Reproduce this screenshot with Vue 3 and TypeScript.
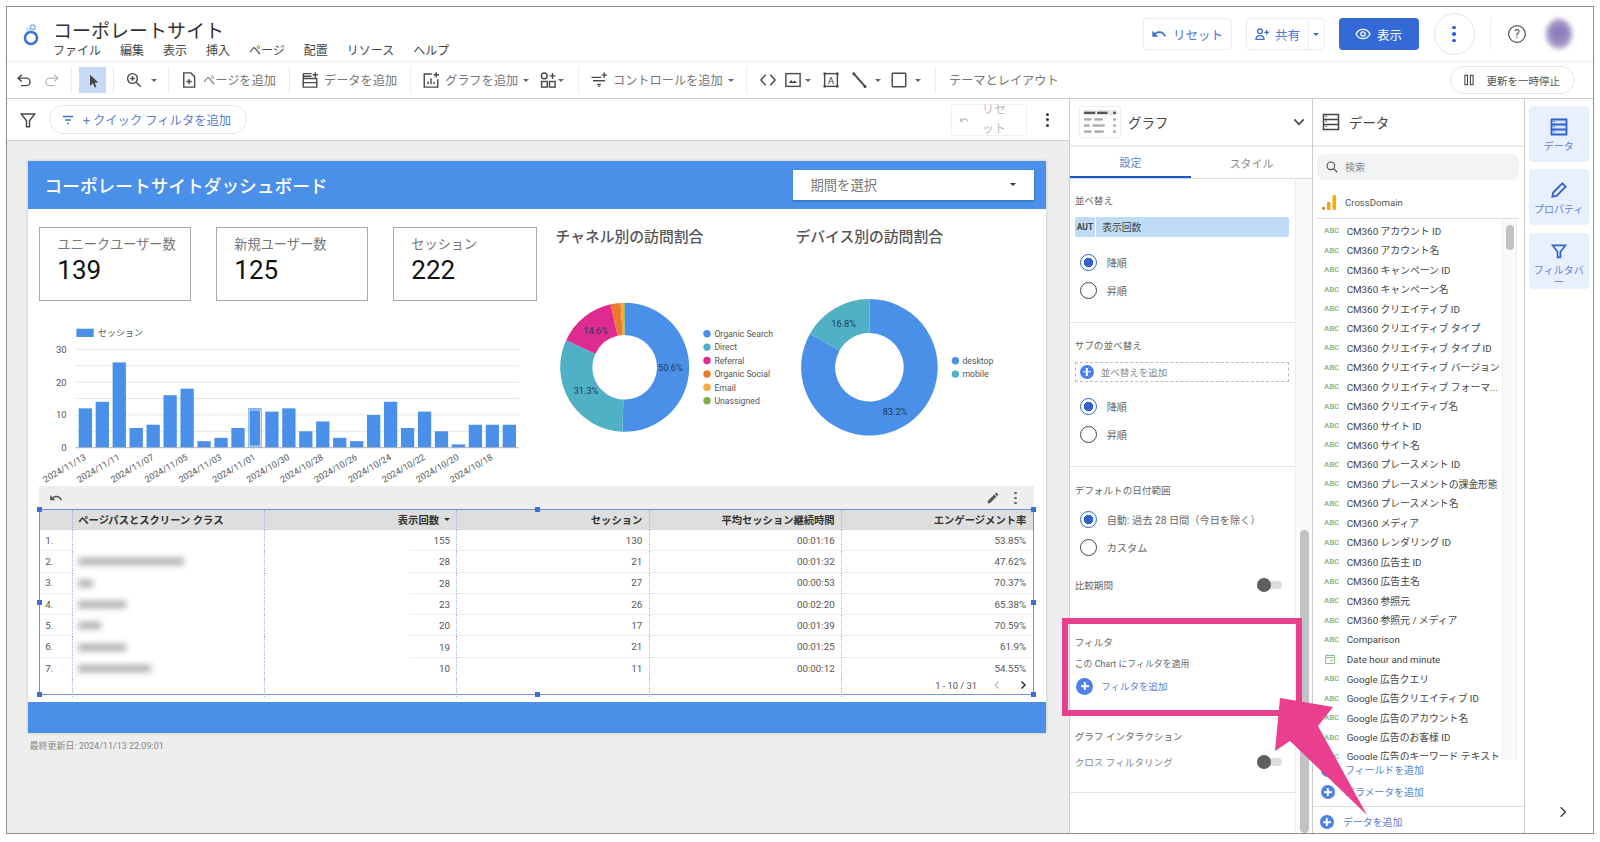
<template>
    <div class="frame">
        <header class="top-bar">
            <svg class="logo" viewBox="0 0 24 34">
                <circle cx="12" cy="21" r="6" fill="none" stroke="#3b73d9" stroke-width="2.6"/>
                <circle cx="13.8" cy="10.2" r="2.4" fill="none" stroke="#7fa8ea" stroke-width="1.3"/>
                <circle cx="8.8" cy="12.5" r="1.4" fill="none" stroke="#9fbdf0" stroke-width="1"/>
            </svg>
            <div class="doc">
                <div class="doc-title">コーポレートサイト</div>
                <nav class="menu">
                    <span v-for="m in menus" :key="m">{{ m }}</span>
                </nav>
            </div>
            <div class="top-actions">
                <button class="btn btn-reset">
                    <svg class="ic-16" viewBox="0 0 24 24"><path :d="icons.undoFill" fill="#3b6fd4"/></svg>
                    リセット
                </button>
                <div class="btn btn-share">
                    <span class="share-main">
                        <svg class="ic-16" viewBox="0 0 24 24"><circle cx="9" cy="8" r="3.5" class="st-blue"/><path d="M3 20c0-4 3-5.500 6-5.500s6 1.500 6 5.500z" class="st-blue"/><path d="M19 6v7M15.500 9.500h7" class="st-blue"/></svg>
                        共有
                    </span>
                    <span class="share-caret"><i class="caret caret-blue"></i></span>
                </div>
                <button class="btn btn-view">
                    <svg class="ic-16" viewBox="0 0 24 24"><path d="M1.5 12C4 7 8 5 12 5s8 2 10.5 7c-2.5 5-6.5 7-10.5 7S4 17 1.500 12z" fill="none" stroke="#fff" stroke-width="2"/><circle cx="12" cy="12" r="3.2" fill="none" stroke="#fff" stroke-width="2"/></svg>
                    表示
                </button>
                <button class="btn-more">
                    <i></i><i></i><i></i>
                </button>
                <span class="top-sep"></span>
                <svg class="help" viewBox="0 0 24 24">
                    <circle cx="12" cy="12" r="10" fill="none" stroke="#555" stroke-width="1.5"/>
                    <text x="12" y="17" text-anchor="middle" class="help-q">?</text>
                </svg>
                <span class="avatar"></span>
            </div>
        </header>

        <div class="toolbar">
            <div class="tb-group g-history">
                <svg class="tb-ic" viewBox="0 0 24 24"><path :d="icons.undo" class="st"/></svg>
                <svg class="tb-ic" viewBox="0 0 24 24"><path :d="icons.redo" class="st-light"/></svg>
            </div>
            <div class="tb-group g-select">
                <span class="select-btn">
                    <svg class="tb-ic" viewBox="0 0 24 24"><path d="M8 5v15l3.8-3.600 2.500 5.600 2.300-1-2.500-5.400 5-.2z" fill="#444"/></svg>
                </span>
            </div>
            <div class="tb-group g-zoom">
                <svg class="tb-ic" viewBox="0 0 24 24"><circle cx="10" cy="10" r="6.5" class="st"/><path d="M15 15l6 6M10 7v6M7 10h6" class="st"/></svg>
                <i class="caret"></i>
            </div>
            <div class="tb-group g-add">
                <svg class="tb-ic" viewBox="0 0 24 24"><path d="M5 2.500h9.500L19.500 7.500V21.500H5zM12 10.500v7M8.500 14h7" class="st"/></svg>
                <span class="tb-text">ページを追加</span>
            </div>
            <div class="tb-group g-add">
                <svg class="tb-ic" viewBox="0 0 24 24"><path d="M3 3.500h11M3 3.500v18h18V10H3M3 15.500h18M3 7h11M19 1.500v7M15.500 5h7" class="st"/></svg>
                <span class="tb-text">データを追加</span>
            </div>
            <div class="tb-group g-add g-chart">
                <svg class="tb-ic" viewBox="0 0 24 24"><path d="M13 4H3v17.500h18V11M8 17.500v-4M12 17.500v-8M16 17.500v-3M19 1.500v7M15.500 5h7" class="st"/></svg>
                <span class="tb-text">グラフを追加</span>
                <i class="caret"></i>
                <svg class="tb-ic ic-components" viewBox="0 0 24 24"><circle cx="7" cy="6.5" r="3.8" class="st"/><path d="M18 2.500v8M14 6.500h8" class="st"/><rect x="3.5" y="14" width="7.5" height="7.5" class="st"/><rect x="14" y="14" width="7.5" height="7.5" class="st"/></svg>
                <i class="caret caret-near"></i>
            </div>
            <div class="tb-group g-add g-control">
                <svg class="tb-ic" viewBox="0 0 24 24"><path d="M2 8.500h13M4 13h16M9.500 18h5M11 20.500h2M19 2v7M15.500 5.500h7" class="st"/></svg>
                <span class="tb-text">コントロールを追加</span>
                <i class="caret"></i>
            </div>
            <div class="tb-group g-insert">
                <svg class="tb-ic" viewBox="0 0 24 24"><path d="M9 5l-6.500 7L9 19M15 5l6.500 7L15 19" class="st"/></svg>
                <svg class="tb-ic" viewBox="0 0 24 24"><rect x="2.5" y="3.5" width="19" height="17" class="st"/><path d="M6.500 16l3-4 2.500 2.500 2-2 3.500 3.500z" fill="#444"/></svg>
                <i class="caret caret-near"></i>
                <svg class="tb-ic ins-text" viewBox="0 0 24 24"><rect x="3.5" y="3.5" width="17" height="17" class="st"/><rect x="2" y="2" width="3" height="3" fill="#444"/><rect x="19" y="2" width="3" height="3" fill="#444"/><rect x="2" y="19" width="3" height="3" fill="#444"/><rect x="19" y="19" width="3" height="3" fill="#444"/><text x="12" y="17" text-anchor="middle" class="a-glyph">A</text></svg>
                <svg class="tb-ic ins-line" viewBox="0 0 24 24"><path d="M5 3.500l15 17" fill="none" stroke="#444" stroke-width="2.5"/><circle cx="5" cy="3.5" r="2" fill="#444"/><circle cx="20" cy="20.5" r="2" fill="#444"/></svg>
                <i class="caret"></i>
                <svg class="tb-ic ins-rect" viewBox="0 0 24 24"><rect x="3" y="3" width="18" height="18" rx="1" class="st"/></svg>
                <i class="caret"></i>
            </div>
            <span class="tb-text theme">テーマとレイアウト</span>
            <button class="pause">
                <svg class="ic-14" viewBox="0 0 24 24"><rect x="5" y="4" width="4.5" height="16" class="st"/><rect x="14.5" y="4" width="4.5" height="16" class="st"/></svg>
                更新を一時停止
            </button>
        </div>

        <div class="workspace">
            <div class="main">
                <div class="filter-bar">
                    <svg class="funnel" viewBox="0 0 24 24"><path d="M3 4h18l-7 9v8h-4v-8z" class="st"/></svg>
                    <button class="quick-filter">
                        <svg class="ic-14" viewBox="0 0 24 24"><path d="M3 6h18M7 12h10M10.500 18h3" fill="none" stroke="#3b6fd4" stroke-width="2.2"/></svg>
                        <span>+ クイック フィルタを追加</span>
                    </button>
                    <div class="reset-off">
                        <svg class="ic-10" viewBox="0 0 24 24"><path :d="icons.undoFill" fill="#bbb"/></svg>
                        <span>リセット</span>
                    </div>
                    <span class="bar-more"><i></i><i></i><i></i></span>
                </div>

                <div class="canvas">
                    <div class="report">
                        <div class="report-head">
                            <h1>コーポレートサイトダッシュボード</h1>
                            <div class="period">
                                <span>期間を選択</span>
                                <i class="caret caret-dark"></i>
                            </div>
                        </div>

                        <div class="report-body">
                            <div class="report-top">
                                <div class="left-col">
                                    <div class="cards">
                                        <div
                                            v-for="card in cards"
                                            :key="card.label"
                                            class="card"
                                            :class="card.cls"
                                        >
                                            <div class="card-label">{{ card.label }}</div>
                                            <div class="card-value">{{ card.value }}</div>
                                        </div>
                                    </div>
                                    <svg class="bar-chart" viewBox="39.3 320 497.4 166.7">
                                        <rect x="76.7" y="328.7" width="17.3" height="8.3" fill="#4a90e8"/>
                                        <text x="98.3" y="336" class="t-axis t-legend">セッション</text>
                                        <line
                                            v-for="g in gridLines"
                                            :key="g"
                                            x1="76"
                                            x2="519"
                                            :y1="g"
                                            :y2="g"
                                            stroke="#e6e6e6"
                                        />
                                        <text
                                            v-for="t in yTicks"
                                            :key="t.label"
                                            x="67"
                                            :y="t.y + 3.5"
                                            text-anchor="end"
                                            class="t-axis"
                                        >{{ t.label }}</text>
                                        <rect
                                            v-for="bar in bars"
                                            :key="bar.x"
                                            :x="bar.x"
                                            :y="bar.y"
                                            width="13.3"
                                            :height="bar.h"
                                            fill="#4a90e8"
                                        />
                                        <rect x="249.5" y="410" width="11.3" height="36.2" fill="none" stroke="#d6e6fb"/>
                                        <line x1="76" x2="519" y1="447.7" y2="447.7" stroke="#aab2bd"/>
                                        <text
                                            v-for="d in xLabels"
                                            :key="d.label"
                                            text-anchor="end"
                                            class="t-axis t-date"
                                            :transform="`translate(${d.x} 459) rotate(-30)`"
                                        >{{ d.label }}</text>
                                    </svg>
                                </div>

                                <div class="pie-block pie-one">
                                    <h2>チャネル別の訪問割合</h2>
                                    <svg class="pie" viewBox="544.3 250 240 200">
                                        <path
                                            v-for="s in channelSlices"
                                            :key="s.name"
                                            :d="s.d"
                                            :fill="s.color"
                                        />
                                        <text
                                            v-for="l in channelLabels"
                                            :key="l.text"
                                            :x="l.x"
                                            :y="l.y"
                                            text-anchor="middle"
                                            class="t-pie"
                                        >{{ l.text }}</text>
                                        <g
                                            v-for="(s, i) in channelSlices"
                                            :key="s.name"
                                        >
                                            <circle cx="707.3" :cy="333.7 + i * 13.4" r="3.7" :fill="s.color"/>
                                            <text x="714.7" :y="337 + i * 13.4" class="t-legend2">{{ s.name }}</text>
                                        </g>
                                    </svg>
                                </div>

                                <div class="pie-block pie-two">
                                    <h2>デバイス別の訪問割合</h2>
                                    <svg class="pie" viewBox="784.3 250 249 200">
                                        <path
                                            v-for="s in deviceSlices"
                                            :key="s.name"
                                            :d="s.d"
                                            :fill="s.color"
                                        />
                                        <text
                                            v-for="l in deviceLabels"
                                            :key="l.text"
                                            :x="l.x"
                                            :y="l.y"
                                            text-anchor="middle"
                                            class="t-pie"
                                        >{{ l.text }}</text>
                                        <g
                                            v-for="(s, i) in deviceSlices"
                                            :key="s.name"
                                        >
                                            <circle cx="955.7" :cy="360.7 + i * 13.4" r="3.7" :fill="s.color"/>
                                            <text x="962.7" :y="364 + i * 13.4" class="t-legend2">{{ s.name }}</text>
                                        </g>
                                    </svg>
                                </div>
                            </div>

                            <div class="table-tools">
                                <svg class="ic-14" viewBox="0 0 24 24"><path :d="icons.undoFill" fill="#555"/></svg>
                                <svg class="ic-14 tool-pencil" viewBox="0 0 24 24"><path d="M3 17.250V21h3.750L17.810 9.940l-3.750-3.750L3 17.250zM20.710 7.040a1 1 0 0 0 0-1.410l-2.340-2.340a1 1 0 0 0-1.410 0l-1.830 1.830 3.750 3.750 1.830-1.830z" fill="#555"/></svg>
                                <span class="tool-more"><i></i><i></i><i></i></span>
                            </div>

                            <div class="table">
                                <div class="tr th">
                                    <div class="td"></div>
                                    <div class="td td-left">ページパスとスクリーン クラス</div>
                                    <div class="td">表示回数 <i class="caret caret-dark"></i></div>
                                    <div class="td">セッション</div>
                                    <div class="td">平均セッション継続時間</div>
                                    <div class="td">エンゲージメント率</div>
                                </div>
                                <div
                                    v-for="(row, i) in rows"
                                    :key="i"
                                    class="tr"
                                    :class="{ 'tr-last': i === rows.length - 1 }"
                                >
                                    <div class="td td-no">{{ i + 1 }}.</div>
                                    <div class="td td-path">
                                        <span
                                            v-if="row.blur"
                                            class="blurred"
                                            :style="{ width: row.blur + 'px' }"
                                        ></span>
                                    </div>
                                    <div class="td td-views">{{ row.views }}</div>
                                    <div class="td">{{ row.sessions }}</div>
                                    <div class="td">{{ row.duration }}</div>
                                    <div class="td">{{ row.rate }}</div>
                                </div>
                                <div class="tr tr-foot">
                                    <div class="td"></div>
                                    <div class="td"></div>
                                    <div class="td"></div>
                                    <div class="td"></div>
                                    <div class="td"></div>
                                    <div class="td td-pager">
                                        <span>1 - 10 / 31</span>
                                        <svg class="ic-12 pager-prev" viewBox="0 0 24 24"><path d="M15 5l-7 7 7 7" fill="none" stroke="#bbb" stroke-width="2.5"/></svg>
                                        <svg class="ic-12 pager-next" viewBox="0 0 24 24"><path d="M9 5l7 7-7 7" fill="none" stroke="#333" stroke-width="3"/></svg>
                                    </div>
                                </div>
                                <i
                                    v-for="h in handles"
                                    :key="h"
                                    class="handle"
                                    :class="h"
                                ></i>
                            </div>
                        </div>

                        <div class="report-foot"></div>
                    </div>
                    <div class="updated">最終更新日: 2024/11/13 22:09:01</div>
                </div>
            </div>

            <aside class="chart-panel">
                <div class="panel-head">
                    <span class="chart-thumb">
                        <svg viewBox="0 0 42 32">
                            <rect x="3" y="3" width="36" height="6" fill="#e8e8e8"/>
                            <g
                                v-for="(r, i) in thumbRows"
                                :key="i"
                            >
                                <rect x="4" :y="r.y" :width="r.a" height="2.5" :fill="r.c"/>
                                <rect :x="r.bx" :y="r.y" :width="r.b" height="2.5" :fill="r.c"/>
                                <rect x="35" :y="r.y" width="3" height="2.5" :fill="r.c"/>
                            </g>
                        </svg>
                    </span>
                    <span class="panel-title">グラフ</span>
                    <svg class="chevron" viewBox="0 0 24 24"><path d="M5 8l7 7.500L19 8" fill="none" stroke="#444" stroke-width="2.4"/></svg>
                </div>
                <div class="tabs">
                    <span class="tab tab-on">設定</span>
                    <span class="tab">スタイル</span>
                </div>
                <div class="panel-scroll">
                    <div class="panel-body">
                        <section class="sec sec-sort">
                            <div class="sec-label">並べ替え</div>
                            <div class="sort-chip"><b>AUT</b><span>表示回数</span></div>
                            <div class="radios">
                                <label class="radio-row"><i class="radio on"></i>降順</label>
                                <label class="radio-row"><i class="radio"></i>昇順</label>
                            </div>
                        </section>
                        <section class="sec sec-sub">
                            <div class="sec-label">サブの並べ替え</div>
                            <div class="sort-add">
                                <i class="plus plus-sm"></i>
                                <span>並べ替えを追加</span>
                            </div>
                            <div class="radios">
                                <label class="radio-row"><i class="radio on"></i>降順</label>
                                <label class="radio-row"><i class="radio"></i>昇順</label>
                            </div>
                        </section>
                        <section class="sec sec-rest">
                            <div class="sec-label">デフォルトの日付範囲</div>
                            <div class="radios radios-date">
                                <label class="radio-row"><i class="radio on"></i>自動: 過去 28 日間（今日を除く）</label>
                                <label class="radio-row"><i class="radio"></i>カスタム</label>
                            </div>
                            <div class="switch-row compare">
                                <span>比較期間</span>
                                <i class="switch"></i>
                            </div>
                            <div class="sec-label filter-label">フィルタ</div>
                            <div class="filter-note">この Chart にフィルタを適用</div>
                            <div class="filter-add">
                                <i class="plus"></i>
                                <span>フィルタを追加</span>
                            </div>
                            <div class="sec-label interact-label">グラフ インタラクション</div>
                            <div class="switch-row cross">
                                <span>クロス フィルタリング</span>
                                <i class="switch"></i>
                            </div>
                        </section>
                    </div>
                    <div class="panel-track"><span></span></div>
                </div>
            </aside>

            <aside class="data-panel">
                <div class="panel-head data-head">
                    <svg class="ic-20" viewBox="0 0 24 24"><path d="M3 3h18v18H3zM3 9h18M3 15h18" fill="none" stroke="#444" stroke-width="1.8"/><path d="M5.500 5.200h1.500M5.500 11.200h1.500M5.500 17.200h1.500" stroke="#444" stroke-width="1.4"/></svg>
                    <span class="panel-title">データ</span>
                </div>
                <div class="search">
                    <svg class="ic-14" viewBox="0 0 24 24"><circle cx="10" cy="10" r="6.5" class="st"/><path d="M15 15l6 6" class="st"/></svg>
                    <span>検索</span>
                </div>
                <div class="source">
                    <svg class="ga" viewBox="0 0 14 15">
                        <circle cx="1.5" cy="13.3" r="1.5" fill="#e37400"/>
                        <rect x="5" y="7" width="3.5" height="8" rx="1" fill="#f0a030"/>
                        <rect x="10.5" y="0" width="3.500" height="15" rx="1" fill="#f9ab00"/>
                    </svg>
                    <span>CrossDomain</span>
                </div>
                <div class="field-area">
                    <ul class="fields">
                        <li
                            v-for="f in fields"
                            :key="f"
                        >
                            <svg
                                v-if="f === 'Date hour and minute'"
                                class="ic-cal"
                                viewBox="0 0 24 24"
                            >
                                <path d="M3 5h18v16H3zM3 9h18M7 2.500V6M17 2.500V6" fill="none" stroke="#8fc08f" stroke-width="2"/>
                                <rect x="13" y="13" width="4" height="4" fill="#8fc08f"/>
                            </svg>
                            <span
                                v-else
                                class="abc"
                            >ABC</span>
                            <span class="field-name">{{ f }}</span>
                        </li>
                    </ul>
                    <div class="field-track"><span></span></div>
                </div>
                <div class="add-rows">
                    <div class="add-row"><i class="plus plus-sm"></i><span>フィールドを追加</span></div>
                    <div class="add-row"><i class="plus plus-sm"></i><span>パラメータを追加</span></div>
                </div>
                <div class="add-data"><i class="plus plus-sm"></i><span>データを追加</span></div>
            </aside>

            <nav class="rail">
                <button class="rail-btn">
                    <svg class="ic-20" viewBox="0 0 24 24"><path d="M3 3h18v18H3zM3 9h18M3 15h18" fill="#d7e4fb" stroke="#2f62d0" stroke-width="2.2"/><path d="M5.500 5.500h1.500M5.500 11.500h1.500M5.500 17.500h1.500" stroke="#2f62d0" stroke-width="1.4"/></svg>
                    <span>データ</span>
                </button>
                <button class="rail-btn">
                    <svg class="ic-20" viewBox="0 0 24 24"><path d="M4 20l1-5L16 4l4 4L9 19z" fill="none" stroke="#2f62d0" stroke-width="2.2"/></svg>
                    <span>プロパティ</span>
                </button>
                <button class="rail-btn">
                    <svg class="ic-20" viewBox="0 0 24 24"><path d="M3 2h18l-7 9v8h-4v-8z" fill="none" stroke="#2f62d0" stroke-width="2.4"/></svg>
                    <span>フィルタバー</span>
                </button>
                <svg class="rail-chevron" viewBox="0 0 24 24"><path d="M8 4l8 8-8 8" fill="none" stroke="#444" stroke-width="2.6"/></svg>
            </nav>
        </div>

        <!-- 注釈の枠と矢印 -->
        <svg class="annotation" viewBox="0 0 1600 842">
            <rect x="1065" y="621" width="234" height="92" fill="none" stroke="#e8408e" stroke-width="6"/>
            <polygon points="1280,698 1333,707 1318,726 1367,815 1290,741 1275,751" fill="#e8408e"/>
        </svg>
    </div>
</template>

<script
    lang="ts"
    setup
>
    interface Slice {
        name: string,
        pct: number,
        color: string,
    }

    const icons = {
        undo: 'M9 14L4 9.500 9 5M4.500 9.500H15a5 5 0 0 1 0 10H8',
        redo: 'M15 14l5-4.500L15 5M19.500 9.500H9a5 5 0 0 0 0 10h7',
        undoFill: 'M12.500 8c-2.650 0-5.050.99-6.900 2.600L2 7v9h9l-3.620-3.620c1.390-1.160 3.160-1.880 5.120-1.880 3.540 0 6.550 2.310 7.600 5.500l2.370-.78C21.080 11.030 17.150 8 12.500 8z',
    };

    const menus = ['ファイル', '編集', '表示', '挿入', 'ページ', '配置', 'リソース', 'ヘルプ'];

    const cards = [
        { label: 'ユニークユーザー数', value: '139', cls: 'card-a' },
        { label: '新規ユーザー数', value: '125', cls: 'card-a' },
        { label: 'セッション', value: '222', cls: 'card-b' },
    ];

    // 棒グラフ
    const barValues = [12, 14, 26, 6, 7, 16, 18, 2, 3, 6, 12, 11, 12, 5, 8, 3, 2, 10, 14, 6, 11, 5, 1, 7, 7, 7];
    const baseY = 447.7;
    const unit = 98.4 / 30;
    const bars = barValues.map((v, i) => ({
        x: 79 + i * 16.96,
        y: baseY - v * unit,
        h: v * unit,
    }));
    const gridLines = [30, 25, 20, 15, 10, 5].map((v) => baseY - v * unit);
    const yTicks = [30, 20, 10, 0].map((v) => ({ label: String(v), y: baseY - v * unit }));
    const xLabels = [
        '2024/11/13', '2024/11/11', '2024/11/07', '2024/11/05', '2024/11/03', '2024/11/01', '2024/10/30',
        '2024/10/28', '2024/10/26', '2024/10/24', '2024/10/22', '2024/10/20', '2024/10/18',
    ].map((label, i) => ({ label, x: 87 + i * 33.9 }));

    // 円グラフ
    function buildSlices(items: Array<Slice>, cx: number, cy: number, r: number, ir: number) {
        let start = 0;
        return items.map((item) => {
            const end = start + (item.pct / 100) * Math.PI * 2;
            const large = end - start > Math.PI ? 1 : 0;
            const p = (rad: number, a: number) => `${cx + rad * Math.sin(a)} ${cy - rad * Math.cos(a)}`;
            const d = `M${p(r, start)}A${r} ${r} 0 ${large} 1 ${p(r, end)}L${p(ir, end)}A${ir} ${ir} 0 ${large} 0 ${p(ir, start)}Z`;
            start = end;
            return { name: item.name, color: item.color, d };
        });
    }

    const channelSlices = buildSlices([
        { name: 'Organic Search', pct: 50.6, color: '#4a90e8' },
        { name: 'Direct', pct: 31.3, color: '#4fb0c6' },
        { name: 'Referral', pct: 14.6, color: '#df2b8f' },
        { name: 'Organic Social', pct: 2.5, color: '#ec7a2c' },
        { name: 'Email', pct: 0.8, color: '#f5a83c' },
        { name: 'Unassigned', pct: 0.2, color: '#7cb342' },
    ], 625, 367.3, 64.5, 32.3);
    const channelLabels = [
        { text: '50.6%', x: 670.7, y: 371.3 },
        { text: '31.3%', x: 586.3, y: 393.7 },
        { text: '14.6%', x: 596, y: 334.3 },
    ];

    const deviceSlices = buildSlices([
        { name: 'desktop', pct: 83.2, color: '#4a90e8' },
        { name: 'mobile', pct: 16.8, color: '#4fb0c6' },
    ], 869.7, 367.3, 68.3, 34.3);
    const deviceLabels = [
        { text: '83.2%', x: 895.3, y: 414.7 },
        { text: '16.8%', x: 844, y: 326.7 },
    ];

    const rows = [
        { blur: 0, views: '155', sessions: '130', duration: '00:01:16', rate: '53.85%' },
        { blur: 106, views: '28', sessions: '21', duration: '00:01:32', rate: '47.62%' },
        { blur: 15, views: '28', sessions: '27', duration: '00:00:53', rate: '70.37%' },
        { blur: 48, views: '23', sessions: '26', duration: '00:02:20', rate: '65.38%' },
        { blur: 23, views: '20', sessions: '17', duration: '00:01:39', rate: '70.59%' },
        { blur: 48, views: '19', sessions: '21', duration: '00:01:25', rate: '61.9%' },
        { blur: 73, views: '10', sessions: '11', duration: '00:00:12', rate: '54.55%' },
    ];

    const handles = ['h-tl', 'h-tm', 'h-tr', 'h-ml', 'h-mr', 'h-bl', 'h-bm', 'h-br'];

    const thumbRows = [
        { y: 5, a: 12, bx: 18, b: 11, c: '#555' },
        { y: 12, a: 8, bx: 15, b: 9, c: '#aaa' },
        { y: 18.5, a: 6, bx: 13, b: 13, c: '#aaa' },
        { y: 25, a: 8, bx: 15, b: 10, c: '#aaa' },
    ];

    const fields = [
        'CM360 アカウント ID',
        'CM360 アカウント名',
        'CM360 キャンペーン ID',
        'CM360 キャンペーン名',
        'CM360 クリエイティブ ID',
        'CM360 クリエイティブ タイプ',
        'CM360 クリエイティブ タイプ ID',
        'CM360 クリエイティブ バージョン',
        'CM360 クリエイティブ フォーマ...',
        'CM360 クリエイティブ名',
        'CM360 サイト ID',
        'CM360 サイト名',
        'CM360 プレースメント ID',
        'CM360 プレースメントの課金形態',
        'CM360 プレースメント名',
        'CM360 メディア',
        'CM360 レンダリング ID',
        'CM360 広告主 ID',
        'CM360 広告主名',
        'CM360 参照元',
        'CM360 参照元 / メディア',
        'Comparison',
        'Date hour and minute',
        'Google 広告クエリ',
        'Google 広告クリエイティブ ID',
        'Google 広告のアカウント名',
        'Google 広告のお客様 ID',
        'Google 広告のキーワード テキスト',
    ];
</script>

<style>
    html,
    body {
        height: 100%;
        margin: 0;
        overflow: hidden;
        background: #fff;
    }
</style>

<style scoped>
    * {
        box-sizing: border-box;
    }

    .frame {
        position: relative;
        display: flex;
        flex-direction: column;
        width: 1587.5px;
        height: 827.5px;
        margin: 6px 0 0 6px;
        border: 1.5px solid #8c8c8c;
        font-family: Roboto, "Noto Sans CJK JP", sans-serif;
        color: #444;
        background: #fff;
    }

    button {
        font-family: inherit;
        cursor: pointer;
    }

    .st {
        fill: none;
        stroke: #4a4a4a;
        stroke-width: 1.9;
    }

    .st-light {
        fill: none;
        stroke: #bdbdbd;
        stroke-width: 1.9;
    }

    .st-blue {
        fill: none;
        stroke: #3b6fd4;
        stroke-width: 2;
    }

    .ic-10 {
        width: 10px;
        height: 10px;
    }

    .ic-12 {
        width: 12px;
        height: 12px;
    }

    .ic-14 {
        width: 14px;
        height: 14px;
    }

    .ic-16 {
        width: 16px;
        height: 16px;
    }

    .ic-20 {
        width: 20px;
        height: 20px;
    }

    .caret {
        display: inline-block;
        width: 0;
        height: 0;
        border-left: 3.5px solid transparent;
        border-right: 3.5px solid transparent;
        border-top: 3.5px solid #666;
    }

    .caret-blue {
        border-top-color: #3b6fd4;
    }

    .caret-dark {
        border-top-color: #333;
    }

    /* ヘッダー */
    .top-bar {
        display: flex;
        align-items: center;
        flex: none;
        height: 55px;
        border-bottom: 1px solid #ececec;
    }

    .logo {
        flex: none;
        width: 24px;
        height: 34px;
        margin: 0 0 0 12px;
    }

    .doc {
        margin-left: 10px;
        padding-top: 11px;
    }

    .doc-title {
        font-size: 19px;
        line-height: 24px;
        color: #333;
    }

    .menu {
        display: flex;
        gap: 19px;
        margin-top: -0.5px;
        font-size: 12px;
        line-height: 16px;
        color: #444;
    }

    .top-actions {
        display: flex;
        align-items: center;
        margin-left: auto;
        padding-right: 21px;
    }

    .btn {
        display: flex;
        align-items: center;
        justify-content: center;
        gap: 6px;
        height: 32px;
        border: 1px solid #ececec;
        border-radius: 4px;
        background: #fff;
        font-size: 12.5px;
        color: #4a78d2;
    }

    .btn-reset {
        width: 89px;
    }

    .btn-share {
        width: 79px;
        margin-left: 14px;
        gap: 0;
    }

    .share-main {
        display: flex;
        flex: 1;
        align-items: center;
        justify-content: center;
        gap: 5px;
    }

    .share-caret {
        display: flex;
        align-items: center;
        justify-content: center;
        width: 16px;
        height: 100%;
        border-left: 1px solid #ececec;
    }

    .btn-view {
        width: 80px;
        margin-left: 14px;
        border: 0;
        background: #346ad8;
        color: #fff;
    }

    .btn-more {
        display: flex;
        flex-direction: column;
        align-items: center;
        justify-content: center;
        gap: 3px;
        width: 41px;
        height: 42px;
        margin-left: 15px;
        border: 1px solid #e6e6e6;
        border-radius: 50%;
        background: #fff;
    }

    .btn-more i {
        width: 3.5px;
        height: 3.5px;
        border-radius: 50%;
        background: #2f62d0;
    }

    .top-sep {
        width: 1px;
        height: 32px;
        margin-left: 15px;
        background: #ececec;
    }

    .help {
        width: 20px;
        height: 20px;
        margin-left: 16px;
    }

    .help-q {
        font-size: 15px;
        fill: #555;
    }

    .a-glyph {
        font-size: 13px;
        fill: #444;
    }

    .avatar {
        width: 26px;
        height: 30px;
        margin-left: 19px;
        border-radius: 50%;
        background: radial-gradient(circle at 50% 45%, #7f74bd 0, #a493c4 55%, #c9bcd0 100%);
        filter: blur(2.5px);
    }

    /* ツールバー */
    .toolbar {
        display: flex;
        align-items: center;
        flex: none;
        height: 37px;
        border-bottom: 1.5px solid #cfcfcf;
    }

    .tb-group {
        display: flex;
        align-items: center;
        height: 26px;
        border-right: 1px solid #ececec;
    }

    .tb-ic {
        flex: none;
        width: 18px;
        height: 18px;
    }

    .tb-text {
        font-size: 12.2px;
        color: #777;
        white-space: nowrap;
    }

    .g-history {
        gap: 9.5px;
        width: 65px;
        padding-left: 8px;
    }

    .g-select {
        justify-content: center;
        width: 42px;
    }

    .select-btn {
        display: flex;
        align-items: center;
        justify-content: center;
        width: 27px;
        height: 26px;
        background: #c8daf6;
    }

    .g-zoom {
        gap: 8px;
        width: 55px;
        padding-left: 11px;
    }

    .g-add {
        gap: 5px;
        width: 121px;
        padding-left: 11px;
    }

    .g-chart {
        width: 167.5px;
    }

    .ic-components {
        margin-left: 5px;
    }

    .caret-near {
        margin-left: -4px;
    }

    .g-control {
        width: 168.5px;
        padding-left: 11.5px;
    }

    .g-insert {
        gap: 7px;
        width: 189px;
        padding-left: 12px;
    }

    .ins-text {
        margin-left: 4px;
    }

    .ins-line {
        margin-left: 3px;
    }

    .ins-rect {
        margin-left: 2px;
    }

    .theme {
        margin-left: 13px;
    }

    .pause {
        display: flex;
        align-items: center;
        gap: 11px;
        height: 28px;
        width: 125px;
        margin-left: auto;
        margin-right: 18px;
        padding: 0 0 0 11px;
        border: 1px solid #e6e6e6;
        border-radius: 14px;
        background: #fff;
        font-size: 10.5px;
        color: #555;
    }

    /* 作業エリア */
    .workspace {
        display: flex;
        flex: 1;
        min-height: 0;
    }

    .main {
        display: flex;
        flex-direction: column;
        flex: none;
        width: 1062px;
    }

    .filter-bar {
        display: flex;
        align-items: center;
        flex: none;
        height: 42px;
        border-bottom: 1.5px solid #cfcfcf;
    }

    .funnel {
        width: 18px;
        height: 18px;
        margin-left: 12px;
    }

    .quick-filter {
        display: flex;
        align-items: center;
        gap: 8px;
        width: 198px;
        height: 29px;
        margin-left: 12px;
        padding: 0 0 0 11px;
        border: 1px solid #e6e6e6;
        border-radius: 15px;
        background: #fff;
        font-size: 12.3px;
        color: #5a7fd0;
        white-space: nowrap;
    }

    .reset-off {
        display: flex;
        align-items: center;
        gap: 12px;
        width: 76px;
        height: 32px;
        margin-left: 704px;
        padding-left: 7px;
        border: 1px solid #f0f0f0;
        border-radius: 3px;
        font-size: 12px;
        line-height: 19px;
        color: #bbb;
    }

    .reset-off span {
        width: 26px;
        text-align: center;
    }

    .bar-more,
    .tool-more {
        display: flex;
        flex-direction: column;
        align-items: center;
        gap: 2.5px;
    }

    .bar-more {
        margin-left: 19px;
    }

    .bar-more i {
        width: 3px;
        height: 3px;
        border-radius: 50%;
        background: #333;
    }

    .canvas {
        flex: 1;
        padding: 19.5px 0 0 20.5px;
        background: #eee;
    }

    .report {
        width: 1018px;
        box-shadow: 0 0 3px rgba(0, 0, 0, 0.2);
        background: #fff;
    }

    .report-head {
        display: flex;
        align-items: center;
        justify-content: space-between;
        height: 48.6px;
        padding: 0 12px 0 17px;
        background: #4a90e8;
    }

    .report-head h1 {
        margin: 0;
        font-size: 17.7px;
        font-weight: 500;
        color: #fff;
    }

    .period {
        display: flex;
        align-items: center;
        justify-content: space-between;
        width: 241px;
        height: 30px;
        padding: 0 18px;
        background: #fff;
        box-shadow: 0 1px 2px rgba(0, 0, 0, 0.25);
        font-size: 13.3px;
        color: #777;
    }

    .report-body {
        height: 493.4px;
        padding-left: 11.3px;
    }

    .report-top {
        display: flex;
        height: 277.4px;
    }

    .left-col {
        flex: none;
        width: 505.7px;
    }

    .cards {
        display: flex;
        gap: 25px;
        padding-top: 18px;
    }

    .card {
        height: 74.4px;
        padding: 8px 0 0 17.5px;
        border: 1px solid #a8a8a8;
    }

    .card-a {
        width: 152px;
    }

    .card-b {
        width: 144.4px;
    }

    .card-label {
        font-size: 13.2px;
        line-height: 18px;
        color: #777;
    }

    .card-value {
        font-size: 26px;
        line-height: 32px;
        color: #111;
    }

    .bar-chart {
        display: block;
        width: 497.4px;
        height: 166.7px;
        margin-top: 18.3px;
    }

    .t-axis {
        font-family: Roboto, "Noto Sans CJK JP", sans-serif;
        font-size: 9.5px;
        fill: #555;
    }

    .t-legend {
        font-size: 9px;
    }

    .t-date {
        font-size: 9px;
    }

    .pie-block {
        flex: none;
    }

    .pie-one {
        width: 240px;
    }

    .pie-two {
        width: 249px;
    }

    .pie-block h2 {
        margin: 17.9px 0 2.8px 11px;
        font-size: 14.8px;
        font-weight: 500;
        line-height: 20px;
        color: #555;
    }

    .pie {
        display: block;
        width: 100%;
        height: 200px;
    }

    .t-pie {
        font-family: Roboto, sans-serif;
        font-size: 9.2px;
        fill: #1f3a5a;
    }

    .t-legend2 {
        font-family: Roboto, sans-serif;
        font-size: 8.7px;
        fill: #555;
    }

    .table-tools {
        display: flex;
        align-items: center;
        width: 995px;
        height: 23px;
        padding: 0 17px 0 10px;
        background: #eee;
    }

    .tool-pencil {
        margin-left: auto;
    }

    .tool-more {
        margin-left: 14.5px;
    }

    .tool-more i {
        width: 2.5px;
        height: 2.5px;
        border-radius: 50%;
        background: #666;
    }

    .table {
        position: relative;
        width: 995px;
        height: 185.6px;
        border: 1px solid #6e8fdc;
        font-size: 9.8px;
        color: #555;
    }

    .tr {
        display: grid;
        grid-template-columns: 33px 192px 192.7px 192.3px 192.4px 1fr;
        height: 21.3px;
    }

    .td {
        display: flex;
        align-items: center;
        justify-content: flex-end;
        padding: 0 6.5px;
        border-right: 1px dotted #9fb3e0;
        border-bottom: 1px solid #eee;
        white-space: nowrap;
    }

    .td:last-child {
        border-right: 0;
    }

    .th {
        height: 19.5px;
        font-size: 10.3px;
        font-weight: 700;
        color: #333;
        background: #dedede;
    }

    .th .td {
        gap: 5px;
        padding-bottom: 1.5px;
        border-bottom: 0;
    }

    .td-left {
        justify-content: flex-start;
        padding-left: 5.5px;
    }

    .td-no {
        justify-content: flex-start;
        padding: 0 5.5px;
    }

    .td-path {
        justify-content: flex-start;
        padding-left: 5px;
        border-bottom: 0;
    }

    .td-views {
        border-bottom: 0;
        background: linear-gradient(#eee, #eee) right bottom / 47px 1px no-repeat;
    }

    .tr-last .td {
        border-bottom: 0;
    }

    .tr-last .td-views {
        background: none;
    }

    .blurred {
        height: 7px;
        background: #ababab;
        filter: blur(3px);
    }

    .tr-foot {
        height: 16px;
    }

    .tr-foot .td {
        border-bottom: 0;
    }

    .td-pager {
        justify-content: flex-start;
        padding: 0 0 6px 93px;
        font-size: 9.3px;
    }

    .pager-prev {
        margin-left: 14px;
    }

    .pager-next {
        margin-left: 13.7px;
    }

    .handle {
        position: absolute;
        width: 5px;
        height: 5px;
        background: #3b6fd4;
    }

    .h-tl,
    .h-ml,
    .h-bl {
        left: -3px;
    }

    .h-tm,
    .h-bm {
        left: 495px;
    }

    .h-tr,
    .h-mr,
    .h-br {
        right: -3px;
    }

    .h-tl,
    .h-tm,
    .h-tr {
        top: -3px;
    }

    .h-ml,
    .h-mr {
        top: 90px;
    }

    .h-bl,
    .h-bm,
    .h-br {
        bottom: -3px;
    }

    .report-foot {
        height: 30.6px;
        background: #4a90e8;
    }

    .updated {
        margin: 8px 0 0 2px;
        font-size: 9px;
        line-height: 11px;
        color: #888;
    }

    /* グラフ設定パネル */
    .chart-panel,
    .data-panel {
        display: flex;
        flex-direction: column;
        flex: none;
        border-left: 1px solid #ccc;
    }

    .chart-panel {
        width: 243px;
    }

    .panel-head {
        display: flex;
        align-items: center;
        flex: none;
        height: 48px;
        padding-left: 9px;
        border-bottom: 2px solid #ececec;
    }

    .chart-thumb {
        width: 42px;
        height: 32px;
        border: 1px solid #eee;
        border-radius: 3px;
    }

    .chart-thumb svg {
        display: block;
        width: 100%;
        height: 100%;
    }

    .panel-title {
        margin-left: 7px;
        font-size: 13.4px;
        color: #444;
    }

    .chevron {
        width: 16px;
        height: 16px;
        margin-left: auto;
        margin-right: 5px;
    }

    .tabs {
        display: flex;
        flex: none;
        height: 32px;
        border-bottom: 1px solid #ddd;
    }

    .tab {
        display: flex;
        align-items: center;
        justify-content: center;
        flex: 1;
        font-size: 10.9px;
        color: #888;
    }

    .tab-on {
        border-bottom: 2px solid #1a56c4;
        color: #5b7fc9;
    }

    .panel-scroll {
        display: flex;
        flex: 1;
        min-height: 0;
    }

    .panel-body {
        flex: 1;
        min-width: 0;
        overflow: hidden;
    }

    .panel-track {
        flex: none;
        width: 17px;
        padding: 351px 3px 0 4px;
        border-left: 1px solid #eee;
        background: #fafafa;
    }

    .panel-track span {
        display: block;
        height: 100%;
        border-radius: 5px;
        background: #c2c2c2;
    }

    .sec {
        padding-left: 4.7px;
        border-bottom: 1px solid #e4e4e4;
    }

    .sec-label {
        font-size: 9.6px;
        line-height: 14px;
        color: #666;
    }

    .sec-sort {
        height: 144px;
        padding-top: 15px;
    }

    .sort-chip {
        display: flex;
        align-items: center;
        width: 214.5px;
        height: 20px;
        margin-top: 9px;
        border-radius: 2px;
        background: #bfdbf5;
        font-size: 9.8px;
        color: #444;
    }

    .sort-chip b {
        width: 21.5px;
        border-right: 1px solid #fff;
        font-size: 8.5px;
        line-height: 20px;
        text-align: center;
    }

    .sort-chip span {
        margin-left: 6px;
    }

    .radios {
        margin-top: 11px;
    }

    .radio-row {
        display: flex;
        align-items: center;
        gap: 9.5px;
        height: 28.2px;
        padding-left: 5.5px;
        font-size: 10.2px;
        color: #666;
    }

    .radio {
        flex: none;
        width: 17px;
        height: 17px;
        border: 1.5px solid #444;
        border-radius: 50%;
    }

    .radio.on {
        border-color: #2f62d0;
        background: radial-gradient(circle, #2f62d0 0 4.5px, #fff 5px);
    }

    .sec-sub {
        height: 144px;
        padding-top: 16px;
    }

    .sort-add {
        display: flex;
        align-items: center;
        gap: 7px;
        width: 214.5px;
        height: 19.5px;
        margin-top: 9px;
        padding-left: 4px;
        border: 1px dashed #bbb;
        font-size: 9.5px;
        color: #888;
    }

    .sec-rest {
        height: 326px;
        padding-top: 17px;
    }

    .radios-date {
        margin-top: 7px;
    }

    .switch-row {
        display: flex;
        align-items: center;
        justify-content: space-between;
        height: 20px;
        padding-right: 13px;
        font-size: 9.6px;
        color: #666;
    }

    .compare {
        margin-top: 14px;
    }

    .switch {
        position: relative;
        width: 25px;
        height: 8px;
        border-radius: 4px;
        background: #ddd;
    }

    .switch::before {
        content: "";
        position: absolute;
        top: -3px;
        left: 0;
        width: 14px;
        height: 14px;
        border-radius: 50%;
        background: #5f5f5f;
    }

    .filter-label {
        margin-top: 41px;
    }

    .filter-note {
        margin-top: 7px;
        font-size: 8.9px;
        line-height: 14px;
        color: #666;
    }

    .filter-add {
        display: flex;
        align-items: center;
        gap: 8px;
        height: 18px;
        margin-top: 6px;
        padding-left: 1.5px;
        font-size: 9.5px;
        color: #5a7fd0;
    }

    .interact-label {
        margin-top: 35px;
    }

    .cross {
        margin-top: 8px;
    }

    .cross span {
        color: #888;
    }

    .plus {
        position: relative;
        flex: none;
        width: 17px;
        height: 17px;
        border-radius: 50%;
        background: #4f80ea;
    }

    .plus::before,
    .plus::after {
        content: "";
        position: absolute;
        top: 50%;
        left: 50%;
        width: 8px;
        height: 1.6px;
        background: #fff;
        transform: translate(-50%, -50%);
    }

    .plus::after {
        transform: translate(-50%, -50%) rotate(90deg);
    }

    .plus-sm {
        width: 14px;
        height: 14px;
    }

    /* データパネル */
    .data-panel {
        width: 212px;
    }

    .data-head {
        padding-left: 8px;
    }

    .data-head .panel-title {
        margin-left: 8px;
    }

    .search {
        display: flex;
        align-items: center;
        gap: 6px;
        flex: none;
        height: 26px;
        margin: 6.5px 5px 0 4px;
        padding-left: 8px;
        border-radius: 8px;
        background: #f1f3f4;
        font-size: 10px;
        color: #888;
    }

    .source {
        display: flex;
        align-items: center;
        gap: 9px;
        flex: none;
        height: 33px;
        margin: 6px 5px 0 4px;
        padding: 2px 0 0 5px;
        border-bottom: 1px solid #ddd;
        font-size: 9.6px;
        color: #555;
    }

    .ga {
        width: 14px;
        height: 15px;
    }

    .field-area {
        display: flex;
        flex: 1;
        min-height: 0;
        overflow: hidden;
    }

    .fields {
        flex: none;
        width: 188.7px;
        margin: 0;
        padding: 2.6px 0 0;
        list-style: none;
    }

    .fields li {
        display: flex;
        align-items: center;
        height: 19.47px;
        padding-left: 11px;
        font-size: 9.8px;
        white-space: nowrap;
        color: #444;
    }

    .abc {
        flex: none;
        width: 22.7px;
        font-size: 7.8px;
        font-weight: 500;
        color: #7db57d;
    }

    .ic-cal {
        flex: none;
        width: 12px;
        height: 12px;
        margin-right: 10.7px;
    }

    .field-track {
        flex: none;
        width: 15.3px;
        padding: 6px 2px 0 3px;
        border-left: 1px solid #eee;
        border-right: 1px solid #eee;
        background: #fafafa;
    }

    .field-track span {
        display: block;
        height: 25.7px;
        border-radius: 4px;
        background: #c2c2c2;
    }

    .add-rows {
        flex: none;
        height: 47px;
        padding: 0 0 0 8px;
        border-bottom: 1px solid #ddd;
        background: #fff;
    }

    .add-row {
        display: flex;
        align-items: center;
        gap: 10px;
        height: 21.7px;
        font-size: 9.9px;
        color: #5a7fd0;
    }

    .add-data {
        display: flex;
        align-items: center;
        gap: 9px;
        flex: none;
        height: 26px;
        padding: 5px 0 0 7px;
        font-size: 9.9px;
        color: #5a7fd0;
    }

    /* 右端のレール */
    .rail {
        display: flex;
        flex-direction: column;
        flex: 1;
        align-items: center;
        gap: 7.5px;
        padding-top: 6.5px;
        border-left: 1px solid #ccc;
    }

    .rail-btn {
        display: flex;
        flex-direction: column;
        align-items: center;
        flex: none;
        width: 60px;
        height: 56px;
        padding: 11px 4px 0;
        border: 0;
        border-radius: 4px;
        background: #e8f0fe;
        font-size: 10px;
        line-height: 12px;
        color: #5f83d4;
    }

    .rail-btn span {
        width: 100%;
        margin-top: 4px;
    }

    .rail-chevron {
        width: 14px;
        height: 14px;
        margin: auto 0 14px 9px;
    }

    .annotation {
        position: absolute;
        top: -7.5px;
        left: -7.5px;
        width: 1600px;
        height: 842px;
        pointer-events: none;
    }
</style>
